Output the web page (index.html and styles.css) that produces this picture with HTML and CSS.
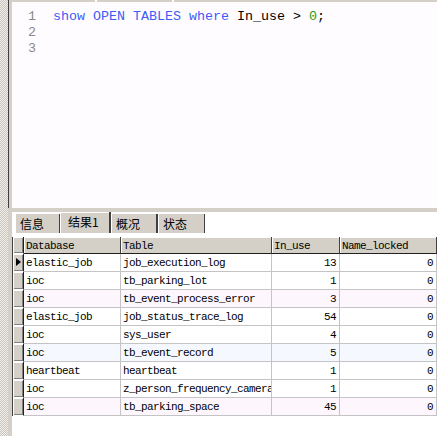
FILE: index.html
```html
<!DOCTYPE html>
<html>
<head>
<meta charset="utf-8">
<link rel="stylesheet" href="styles.css">
</head>
<body>
<div class="app">
  <div class="dither"></div>
  <div class="main">
    <div class="editor-pane">
      <div class="topbar"><span class="seg s1"></span><span class="seg s2"></span><span class="seg s3"></span></div>
      <div class="editor">
        <div class="line"><span class="ln">1</span><span class="code"><span class="kw">show OPEN TABLES where</span> In_use &gt; <span class="num">0</span>;</span></div>
        <div class="line"><span class="ln">2</span><span class="code"></span></div>
        <div class="line"><span class="ln">3</span><span class="code"></span></div>
      </div>
    </div>
    <div class="splitter"></div>
    <div class="results">
      <div class="tabs">
        <div class="tab t1">信息</div>
        <div class="tab active t2">结果1</div>
        <div class="tab t3">概况</div>
        <div class="tab t4">状态</div>
      </div>
      <div class="grid">
        <div class="hd ind"></div><div class="hd">Database</div><div class="hd">Table</div><div class="hd">In_use</div><div class="hd">Name_locked</div>

        <div class="ind cur"><span class="arrow"></span></div><div class="c">elastic_job</div><div class="c">job_execution_log</div><div class="c n">13</div><div class="c n">0</div>
        <div class="ind"></div><div class="c">ioc</div><div class="c">tb_parking_lot</div><div class="c n">1</div><div class="c n">0</div>
        <div class="ind"></div><div class="c pink">ioc</div><div class="c pink">tb_event_process_error</div><div class="c n pink">3</div><div class="c n pink">0</div>
        <div class="ind"></div><div class="c">elastic_job</div><div class="c">job_status_trace_log</div><div class="c n">54</div><div class="c n">0</div>
        <div class="ind"></div><div class="c">ioc</div><div class="c">sys_user</div><div class="c n">4</div><div class="c n">0</div>
        <div class="ind"></div><div class="c blue">ioc</div><div class="c blue">tb_event_record</div><div class="c n blue">5</div><div class="c n blue">0</div>
        <div class="ind"></div><div class="c">heartbeat</div><div class="c">heartbeat</div><div class="c n">1</div><div class="c n">0</div>
        <div class="ind"></div><div class="c">ioc</div><div class="c">z_person_frequency_camera</div><div class="c n">1</div><div class="c n">0</div>
        <div class="ind"></div><div class="c pink">ioc</div><div class="c pink">tb_parking_space</div><div class="c n pink">45</div><div class="c n pink">0</div>
      </div>
    </div>
  </div>
</div>
</body>
</html>
```
FILE: styles.css
```css
html, body {
  margin: 0;
  padding: 0;
  background: #ffffff;
}
.app {
  display: flex;
  width: 437px;
  height: 436px;
  overflow: hidden;
}
.dither {
  width: 8px;
  flex: none;
  background: repeating-conic-gradient(#c9c5bd 0 25%, #f1efeb 0 50%) 0 0 / 2px 2px;
}
.main {
  flex: 1;
  display: flex;
  flex-direction: column;
  min-width: 0;
}
.editor-pane {
  height: 208px;
  flex: none;
  border-left: 1px solid #404040;
  background: #d4d0c8;
  padding-left: 3px;
  display: flex;
  flex-direction: column;
}
.topbar {
  height: 2px;
  display: flex;
  gap: 2px;
  background: #ffffff;
}
.seg { background: #d4d0c8; height: 2px; }
.s1 { width: 83px; }
.s2 { width: 75px; }
.s3 { flex: 1; }
.editor {
  flex: 1;
  background: #fffcff;
  padding-top: 7px;
  font-family: "Liberation Mono", monospace;
  font-size: 13.33px;
}
.line {
  display: flex;
  height: 16px;
  line-height: 16px;
}
.ln {
  width: 24px;
  text-align: right;
  color: #8a8a8a;
  flex: none;
}
.code {
  margin-left: 17px;
  color: #000;
  white-space: pre;
}
.kw { color: #3d5cf5; }
.num { color: #1c9a1c; }
.splitter {
  height: 4px;
  flex: none;
  background: #d4d0c8;
}
.results {
  flex: 1;
  background: #ffffff;
  border-left: 4px solid #d4d0c8;
  display: flex;
  flex-direction: column;
  align-items: flex-start;
}
.tabs {
  height: 25px;
  flex: none;
  align-self: stretch;
  background: #ffffff;
  display: flex;
  align-items: flex-start;
  padding-left: 3px;
  font-family: "Noto Sans CJK SC", sans-serif;
  font-size: 12px;
  color: #000;
}
.tab {
  margin-top: 2px;
  height: 19px;
  line-height: 19px;
  background: #d4d0c8;
  box-shadow: inset 1px 0 0 #ffffff;
  border-right: 1px solid #404040;
  padding-left: 5px;
  box-sizing: border-box;
}
.t1 { width: 45px; }
.t2 { width: 51px; }
.t3 { width: 46px; }
.t4 { width: 48px; border-left: 1px solid #404040; }
.tab.active {
  margin-top: 0;
  height: 21px;
  line-height: 20px;
  box-shadow: inset 1px 1px 0 #ffffff;
  border-right: 2px solid #404040;
  padding-left: 8px;
}
.grid {
  background: #ffffff;
  display: grid;
  grid-template-columns: 11px 97px 151px 68px 97px;
  grid-template-rows: 17px repeat(9, 18px);
  border-left: 1px solid #404040;
  font-family: "Liberation Mono", monospace;
  font-size: 11px;
  letter-spacing: -0.6px;
  color: #000;
}
.hd {
  background: #d4d0c8;
  box-shadow: inset 1px 1px 0 #ffffff;
  border-right: 1px solid #404040;
  border-bottom: 1px solid #202020;
  line-height: 15px;
  padding-top: 2px;
  padding-left: 2px;
  white-space: nowrap;
  overflow: hidden;
}
.hd.ind { padding: 0; }
.ind {
  background: #d4d0c8;
  box-shadow: inset 1px 1px 0 #ffffff, inset -1px -1px 0 #808080;
  border-right: 1px solid #202020;
  border-bottom: 1px solid #ffffff;
  position: relative;
}
.arrow {
  position: absolute;
  left: 3px;
  top: 4px;
  width: 0;
  height: 0;
  border-top: 4px solid transparent;
  border-bottom: 4px solid transparent;
  border-left: 5px solid #000;
}
.c {
  border-right: 1px solid #c4c4c4;
  border-bottom: 1px solid #c4c4c4;
  line-height: 15px;
  padding-top: 2px;
  padding-left: 2px;
  white-space: nowrap;
  overflow: hidden;
}
.c.n {
  text-align: right;
  padding-right: 3px;
  padding-left: 0;
}
.pink { background: #fdf7fd; }
.blue { background: #f5f8fe; }
```
